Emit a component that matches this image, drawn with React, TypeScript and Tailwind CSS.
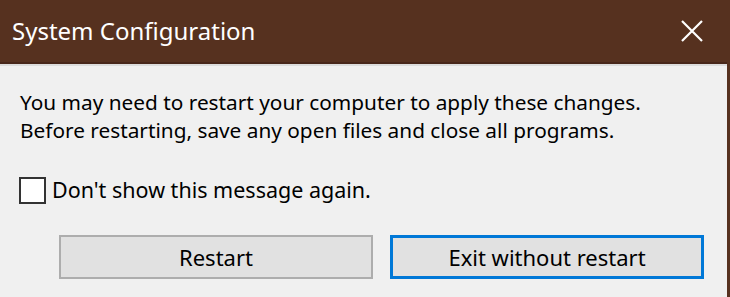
const App = () => {
    return (
        <div className="w-[730px] h-[297px] overflow-hidden flex bg-[#f0f0f0]" style={{ fontFamily: '"Noto Sans", "Open Sans", sans-serif' }}>
            <div className="flex-1 flex flex-col">
                {/* Title bar */}
                <div className="h-[64px] bg-[#56311f] flex items-center justify-between pl-[12px] pr-[24px] border-b-[2px] border-[#48271a]">
                    <span className="text-white text-[24px]">System Configuration</span>
                    <svg className="w-[22px] h-[22px]" viewBox="0 0 22 22" fill="none" stroke="white" strokeWidth={2.2}>
                        <path d="M1 1L21 21M21 1L1 21" />
                    </svg>
                </div>
                <div className="h-[2px] bg-[#dcdcdc]" />

                {/* Message */}
                <div className="pl-[20px] pt-[22px] text-[20.8px] leading-[28px] text-black">
                    <p>You may need to restart your computer to apply these changes.</p>
                    <p>Before restarting, save any open files and close all programs.</p>
                </div>

                {/* Checkbox */}
                <label className="mt-[30px] ml-[19px] flex items-center gap-[6px] text-[21.5px] text-black">
                    <span className="w-[27px] h-[27px] border-[2px] border-[#333] bg-white" />
                    <span>Don't show this message again.</span>
                </label>

                {/* Buttons */}
                <div className="mt-[29px] ml-[59px] flex gap-[17px]">
                    <button className="w-[314px] h-[44px] bg-[#e1e1e1] border-[2px] border-[#adadad] text-[22px] text-black">
                        Restart
                    </button>
                    <button className="w-[314px] h-[44px] bg-[#e1e1e1] border-[3px] border-[#0078d7] text-[22px] text-black">
                        Exit without restart
                    </button>
                </div>
            </div>
            <div className="w-[3px] bg-[#56311f]" />
        </div>
    );
};

export default App;
